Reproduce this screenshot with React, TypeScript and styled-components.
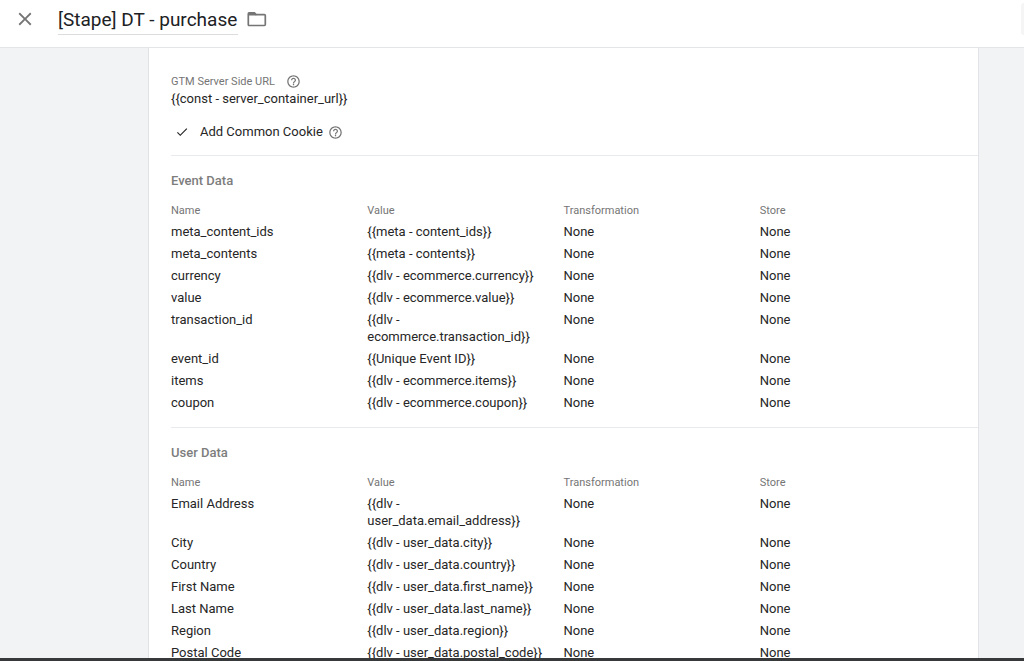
import React from "react";
import styled, { createGlobalStyle } from "styled-components";
import { MdCheck, MdClose, MdHelpOutline } from "react-icons/md";

const GlobalStyle = createGlobalStyle`
  *, *::before, *::after { box-sizing: border-box; }
  body {
    margin: 0;
    background: #f1f3f4;
    color: #262626;
    font: 400 13px/17px Roboto, "Liberation Sans", sans-serif;
  }
`;

const Page = styled.div`
  display: grid;
  grid-template-rows: auto minmax(0, 1fr) 3px;
  height: 100vh;
`;

const Header = styled.header`
  display: flex;
  align-items: flex-start;
  height: 48px;
  padding: 3px 0 0 14px;
  background: #fff;
  border-bottom: 1px solid #e4e5e7;
`;

const IconButton = styled.button`
  display: inline-flex;
  flex: none;
  padding: 0;
  border: 0;
  background: none;
  color: #757575;
  cursor: pointer;
`;

const HeaderButton = styled(IconButton)`
  padding-top: 5px;
`;

const TitleInput = styled.input`
  width: 180px;
  height: 32px;
  margin: 0 8px 0 22px;
  padding: 2px 0 0;
  border: 0;
  border-bottom: 1px solid #dcdcdc;
  outline: 0;
  background: none;
  color: #202124;
  font: 400 19px/28px Roboto, "Liberation Sans", sans-serif;
`;

const HeaderAction = styled.button`
  width: 3px;
  height: 32px;
  margin-left: auto;
  padding: 0;
  border: 0;
  border-radius: 3px 0 0 3px;
  background: #f5f5f5;
`;

const Scroller = styled.main`
  overflow-y: auto;
  scrollbar-width: none;
  padding: 0 45px 0 149px;
`;

const Card = styled.div`
  background: #fff;
  border-right: 1px solid #e2e3e8;
  box-shadow: -1px 0 0 #e0e2e4;
  padding-left: 22px;
`;

const Section = styled.section`
  padding: 15px 22px 13px 0;
  border-bottom: 1px solid #e8eaed;
`;

const Settings = styled(Section)`
  padding-top: 25px;
  padding-bottom: 14px;
`;

const FieldLabel = styled.div`
  display: flex;
  align-items: center;
  gap: 11px;
  color: #757575;
  font-size: 11px;
`;

const CheckRow = styled.div`
  display: flex;
  align-items: center;
  gap: 5px;
  margin-top: 16px;
  padding-left: 4px;
  line-height: 18px;
`;

const CheckLabel = styled.span`
  padding-left: 6px;
`;

const SectionTitle = styled.h2`
  margin: 0 0 10px;
  color: #7d7d7d;
  font-size: 13px;
  font-weight: 500;
  line-height: 19px;
`;

const Table = styled.table`
  width: 100%;
  table-layout: fixed;
  border-collapse: collapse;
`;

const HeadCell = styled.th`
  padding: 2px 16px 2px 0;
  color: #757575;
  font-size: 11px;
  font-weight: 400;
  text-align: left;
`;

const Cell = styled.td`
  padding: 2px 16px 3px 0;
  vertical-align: top;
`;

const BottomBar = styled.footer`
  background: #37393b;
`;

type Row = [name: string, value: string];

const eventData: Row[] = [
  ["meta_content_ids", "{{meta - content_ids}}"],
  ["meta_contents", "{{meta - contents}}"],
  ["currency", "{{dlv - ecommerce.currency}}"],
  ["value", "{{dlv - ecommerce.value}}"],
  ["transaction_id", "{{dlv - ecommerce.transaction_id}}"],
  ["event_id", "{{Unique Event ID}}"],
  ["items", "{{dlv - ecommerce.items}}"],
  ["coupon", "{{dlv - ecommerce.coupon}}"],
];

const userData: Row[] = [
  ["Email Address", "{{dlv - user_data.email_address}}"],
  ["City", "{{dlv - user_data.city}}"],
  ["Country", "{{dlv - user_data.country}}"],
  ["First Name", "{{dlv - user_data.first_name}}"],
  ["Last Name", "{{dlv - user_data.last_name}}"],
  ["Region", "{{dlv - user_data.region}}"],
  ["Postal Code", "{{dlv - user_data.postal_code}}"],
];

const columns = ["Name", "Value", "Transformation", "Store"];

function DataSection({ title, rows }: { title: string; rows: Row[] }) {
  return (
    <Section>
      <SectionTitle>{title}</SectionTitle>
      <Table aria-label={title}>
        <thead>
          <tr>
            {columns.map((column) => (
              <HeadCell key={column} scope="col">{column}</HeadCell>
            ))}
          </tr>
        </thead>
        <tbody>
          {rows.map(([name, value]) => (
            <tr key={name}>
              <Cell>{name}</Cell>
              <Cell>{value}</Cell>
              <Cell>None</Cell>
              <Cell>None</Cell>
            </tr>
          ))}
        </tbody>
      </Table>
    </Section>
  );
}

function HelpButton({ topic }: { topic: string }) {
  return (
    <IconButton type="button" aria-label={`Help: ${topic}`}>
      <MdHelpOutline size={15} />
    </IconButton>
  );
}

function FolderIcon() {
  return (
    <svg width="22" height="22" viewBox="0 0 22 22" fill="none" aria-hidden="true">
      <path
        d="M3.2 4.8H8.4L10.2 6.6H18.4Q19.3 6.6 19.3 7.5V16.6Q19.3 17.5 18.4 17.5H3.2Q2.3 17.5 2.3 16.6V5.7Q2.3 4.8 3.2 4.8Z"
        stroke="currentColor"
        strokeWidth="1.7"
      />
      <path d="M2.3 4.8H8.4L10.2 6.6V7.6H2.3Z" fill="currentColor" />
    </svg>
  );
}

export default function App() {
  return (
    <>
      <GlobalStyle />
      <Page>
        <Header>
          <HeaderButton type="button" aria-label="Close">
            <MdClose size={22} />
          </HeaderButton>
          <TitleInput aria-label="Tag name" defaultValue="[Stape] DT - purchase" />
          <HeaderButton type="button" aria-label="Move to folder">
            <FolderIcon />
          </HeaderButton>
          <HeaderAction type="button" aria-label="Save" />
        </Header>
        <Scroller>
          <Card>
            <Settings>
              <FieldLabel>
                GTM Server Side URL
                <HelpButton topic="GTM Server Side URL" />
              </FieldLabel>
              <div>{"{{const - server_container_url}}"}</div>
              <CheckRow>
                <MdCheck size={14} />
                <CheckLabel>Add Common Cookie</CheckLabel>
                <HelpButton topic="Add Common Cookie" />
              </CheckRow>
            </Settings>
            <DataSection title="Event Data" rows={eventData} />
            <DataSection title="User Data" rows={userData} />
          </Card>
        </Scroller>
        <BottomBar />
      </Page>
    </>
  );
}
